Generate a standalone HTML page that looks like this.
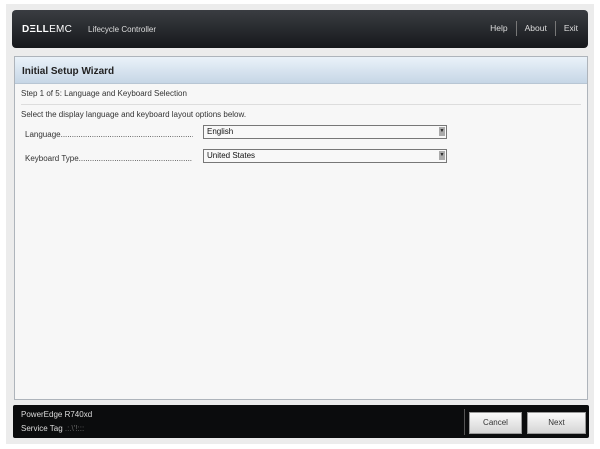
<!DOCTYPE html>
<html><head><style>
body{margin:0;width:600px;height:449px;background:#fff;font-family:"Liberation Sans",sans-serif;position:relative;overflow:hidden}
.frame{position:absolute;left:6px;top:4px;width:588px;height:440px;background:#ececec}
.hdr{position:absolute;left:12px;top:10px;width:576px;height:38px;border-radius:4px;background:linear-gradient(#3a3d42,#16181b);color:#ddd}
.logo{position:absolute;left:10px;top:14px;font-size:10px;font-weight:bold;color:#fff;letter-spacing:0.3px}
.logo span{font-weight:normal}
.lc{position:absolute;left:76px;top:15px;font-size:8px;color:#ddd}
.nav{position:absolute;right:10px;top:11px;font-size:8.5px;color:#ddd}
.nav i{display:inline-block;width:1px;height:15px;background:#777;margin:0 8px;vertical-align:middle}
.panel{position:absolute;left:14px;top:56px;width:572px;height:342px;background:#f7f7f7;border:1px solid #aeb4bb}
.title{height:26px;background:linear-gradient(#eaf2f9,#c6d6e6);font-size:10px;font-weight:bold;color:#222;line-height:30px;padding-left:7px;border-bottom:1px solid #b8c6d4}
.step{position:absolute;left:6px;top:32px;font-size:8px;color:#333}
.line{position:absolute;left:6px;right:6px;top:47px;height:1px;background:#ddd}
.sel{position:absolute;left:6px;top:53px;font-size:8px;color:#333}
.lbl{position:absolute;left:10px;font-size:8px;color:#333;width:168px;overflow:hidden;white-space:nowrap}
.dd{position:absolute;left:188px;width:239px;height:12px;border:1px solid #777;background:#f8f8f8;font-size:8px;line-height:12px;padding-left:3px;color:#111}
.dd b{position:absolute;right:1px;top:1px;width:6px;height:9px;background:#aaa;font-size:5px;line-height:9px;text-align:center;color:#222}
.ftr{position:absolute;left:13px;top:405px;width:576px;height:33px;background:#0b0c0d;border-radius:2px;color:#ddd;font-size:8px}
.btn{position:absolute;top:7px;height:20px;background:linear-gradient(#fafafa,#d5d5d5);border:1px solid #999;color:#333;font-size:8px;text-align:center;line-height:20px}
</style></head><body>
<div class="frame"></div>
<div class="hdr"><div class="logo">DΞLL<span>EMC</span></div><div class="lc">Lifecycle Controller</div>
<div class="nav">Help<i></i>About<i></i>Exit</div></div>
<div class="panel"><div class="title">Initial Setup Wizard</div>
<div class="step">Step 1 of 5: Language and Keyboard Selection</div><div class="line"></div>
<div class="sel">Select the display language and keyboard layout options below.</div>
<div class="lbl" style="top:73px">Language.............................................................</div>
<div class="dd" style="top:68px">English<b>▼</b></div>
<div class="lbl" style="top:97px">Keyboard Type...................................................</div>
<div class="dd" style="top:92px">United States<b>▼</b></div>
</div>
<div class="ftr"><div style="position:absolute;left:8px;top:5px">PowerEdge R740xd</div><div style="position:absolute;left:8px;top:19px">Service Tag <span style="color:#666">.:.\'!:::</span></div>
<div style="position:absolute;left:451px;top:4px;width:1px;height:26px;background:#555"></div>
<div class="btn" style="left:456px;width:51px">Cancel</div><div class="btn" style="left:514px;width:57px">Next</div></div>
</body></html>
